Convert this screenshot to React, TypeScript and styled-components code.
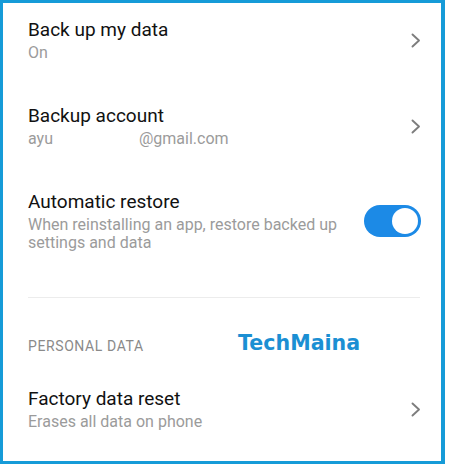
import React from "react";
import styled, { createGlobalStyle } from "styled-components";

const Global = createGlobalStyle`
  html, body { margin: 0; padding: 0; background: #ffffff; }
  body { font-family: Roboto, "Noto Sans", Arial, sans-serif; -webkit-font-smoothing: antialiased; }
`;

const Frame = styled.div`
  box-sizing: border-box;
  width: 445px;
  height: 464px;
  border: 3px solid #169bd8;
  border-right-width: 4px;
  background: #ffffff;
  overflow: hidden;
  display: flex;
  flex-direction: column;
  padding: 0 20px 0 25px;
`;

const Row = styled.div<{ $first?: boolean }>`
  display: flex;
  align-items: center;
  gap: 16px;
  padding: ${(p) => (p.$first ? "15px" : "21px")} 0 21px;
`;

const TextCol = styled.div`
  flex: 1;
  min-width: 0;
  display: flex;
  flex-direction: column;
  gap: 2px;
`;

const Title = styled.div`
  font-size: 19px;
  line-height: 24px;
  color: #111111;
`;

const Subtitle = styled.div`
  font-size: 16px;
  line-height: 18px;
  color: #9b9b9b;
`;

const Redacted = styled.span`
  display: inline-block;
  width: 86px;
`;

const Chevron = styled.svg`
  width: 10px;
  height: 15px;
  flex: none;
`;

const Track = styled.div<{ $on: boolean }>`
  box-sizing: border-box;
  width: 57px;
  height: 32px;
  border-radius: 16px;
  background: ${(p) => (p.$on ? "#1c8ae6" : "#cccccc")};
  flex: none;
  display: flex;
  align-items: center;
  justify-content: ${(p) => (p.$on ? "flex-end" : "flex-start")};
  padding: 0 3px;
`;

const Knob = styled.div`
  width: 26px;
  height: 26px;
  border-radius: 50%;
  background: #ffffff;
`;

const Divider = styled.div`
  height: 1px;
  background: #ececec;
  margin-top: 24px;
  margin-right: 1px;
`;

const Header = styled.div`
  position: relative;
  font-size: 14px;
  line-height: 20px;
  color: #8a8a8a;
  letter-spacing: 0.6px;
  margin-top: 38px;
  margin-bottom: 10px;
`;

const Watermark = styled.span`
  position: absolute;
  left: 210px;
  top: -7px;
  font-family: "DejaVu Sans", Verdana, sans-serif;
  font-weight: bold;
  font-size: 20.6px;
  line-height: 28px;
  color: #1b8fd3;
  letter-spacing: 0px;
`;

const ChevronIcon = () => (
  <Chevron viewBox="0 0 10 15">
    <path d="M1.5 1.5 L8 7.5 L1.5 13.5" fill="none" stroke="#7d7d7d" strokeWidth="1.9" strokeLinecap="round" strokeLinejoin="round" />
  </Chevron>
);

const Toggle = ({ on }: { on: boolean }) => (
  <Track $on={on}>
    <Knob />
  </Track>
);

export default function App() {
  return (
    <>
      <Global />
      <Frame>
        <Row $first>
          <TextCol>
            <Title>Back up my data</Title>
            <Subtitle>On</Subtitle>
          </TextCol>
          <ChevronIcon />
        </Row>
        <Row>
          <TextCol>
            <Title>Backup account</Title>
            <Subtitle>
              ayu<Redacted />@gmail.com
            </Subtitle>
          </TextCol>
          <ChevronIcon />
        </Row>
        <Row>
          <TextCol>
            <Title>Automatic restore</Title>
            <Subtitle>
              When reinstalling an app, restore backed up
              <br />
              settings and data
            </Subtitle>
          </TextCol>
          <Toggle on />
        </Row>
        <Divider />
        <Header>
          PERSONAL DATA
          <Watermark>TechMaina</Watermark>
        </Header>
        <Row>
          <TextCol>
            <Title>Factory data reset</Title>
            <Subtitle>Erases all data on phone</Subtitle>
          </TextCol>
          <ChevronIcon />
        </Row>
      </Frame>
    </>
  );
}
